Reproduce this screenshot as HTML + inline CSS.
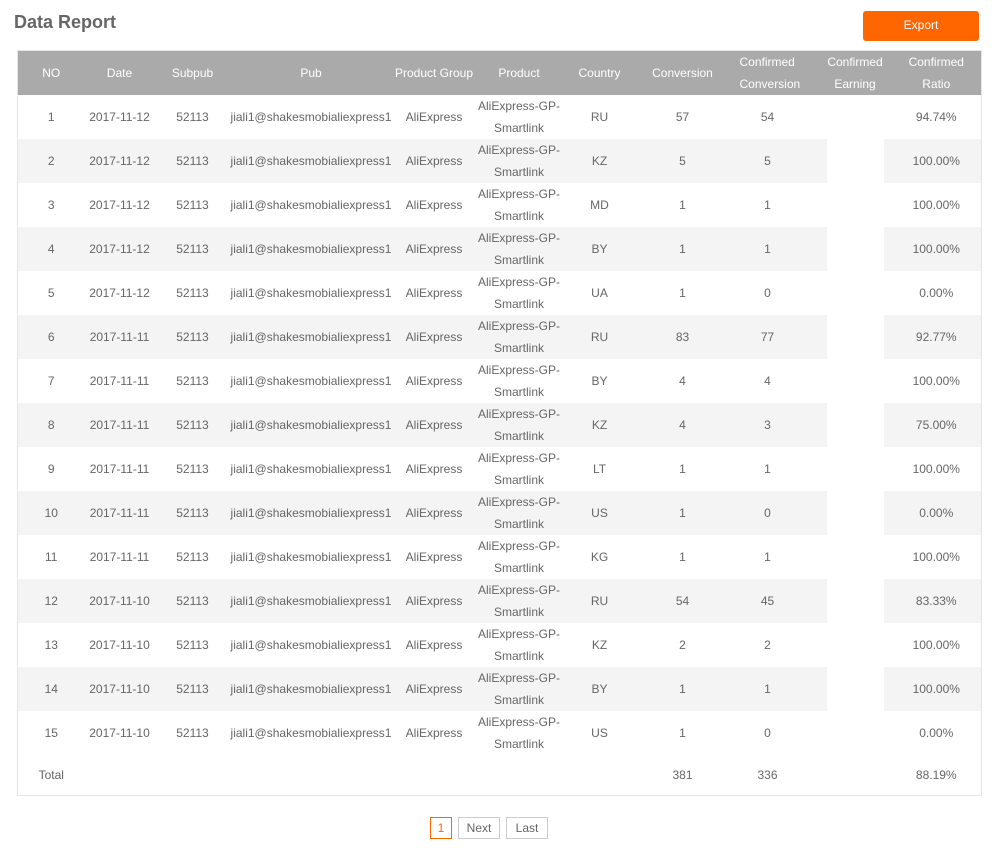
<!DOCTYPE html>
<html><head><meta charset="utf-8"><style>
body{margin:0;background:#fff;font-family:"Liberation Sans",Arial,sans-serif;font-size:12px;color:#666;width:999px;height:858px;position:relative;overflow:hidden}
h1{position:absolute;left:14px;top:10px;margin:0;font-size:18px;font-weight:bold;color:#666;line-height:24px}
.btn{position:absolute;left:863px;top:11px;width:116px;height:30px;background:#ff6600;border-radius:3px;color:#fff;font-size:12px;line-height:29px;text-align:center}
table{position:absolute;left:17px;top:50px;border-collapse:collapse;table-layout:fixed;border:1px solid #e5e5e5;width:964px}
th{background:#aaa;color:#fff;font-weight:normal;height:44px;line-height:22px;padding:0;text-align:center}
td{height:44px;line-height:22px;padding:0;text-align:center}
tr.s td{background:#f4f4f4}
tr.s td.ce{background:#fff}
td.cc,th.cc{padding-right:19px}
td.cr,th.cr{padding-left:8px}
tr.t td{height:40px}
.pg{position:absolute;top:817px;height:20px;border:1px solid #ccc;line-height:20px;text-align:center;color:#666}
</style></head><body>
<h1>Data Report</h1>
<div class="btn">Export</div>
<table>
<colgroup><col style="width:67px"><col style="width:70px"><col style="width:76px"><col style="width:161px"><col style="width:85px"><col style="width:85px"><col style="width:76px"><col style="width:90px"><col style="width:99px"><col style="width:57px"><col style="width:98px"></colgroup>
<tr><th>NO</th><th>Date</th><th>Subpub</th><th>Pub</th><th>Product Group</th><th>Product</th><th>Country</th><th>Conversion</th><th class="cc" style="padding-right:0;padding-left:0;text-align:left;padding-left:12px">Confirmed<br>Conversion</th><th>Confirmed<br>Earning</th><th class="cr">Confirmed<br>Ratio</th></tr>
<tr><td>1</td><td>2017-11-12</td><td>52113</td><td>jiali1@shakesmobialiexpress1</td><td>AliExpress</td><td>AliExpress-GP-<br>Smartlink</td><td>RU</td><td>57</td><td class="cc">54</td><td class="ce"></td><td class="cr">94.74%</td></tr>
<tr class="s"><td>2</td><td>2017-11-12</td><td>52113</td><td>jiali1@shakesmobialiexpress1</td><td>AliExpress</td><td>AliExpress-GP-<br>Smartlink</td><td>KZ</td><td>5</td><td class="cc">5</td><td class="ce"></td><td class="cr">100.00%</td></tr>
<tr><td>3</td><td>2017-11-12</td><td>52113</td><td>jiali1@shakesmobialiexpress1</td><td>AliExpress</td><td>AliExpress-GP-<br>Smartlink</td><td>MD</td><td>1</td><td class="cc">1</td><td class="ce"></td><td class="cr">100.00%</td></tr>
<tr class="s"><td>4</td><td>2017-11-12</td><td>52113</td><td>jiali1@shakesmobialiexpress1</td><td>AliExpress</td><td>AliExpress-GP-<br>Smartlink</td><td>BY</td><td>1</td><td class="cc">1</td><td class="ce"></td><td class="cr">100.00%</td></tr>
<tr><td>5</td><td>2017-11-12</td><td>52113</td><td>jiali1@shakesmobialiexpress1</td><td>AliExpress</td><td>AliExpress-GP-<br>Smartlink</td><td>UA</td><td>1</td><td class="cc">0</td><td class="ce"></td><td class="cr">0.00%</td></tr>
<tr class="s"><td>6</td><td>2017-11-11</td><td>52113</td><td>jiali1@shakesmobialiexpress1</td><td>AliExpress</td><td>AliExpress-GP-<br>Smartlink</td><td>RU</td><td>83</td><td class="cc">77</td><td class="ce"></td><td class="cr">92.77%</td></tr>
<tr><td>7</td><td>2017-11-11</td><td>52113</td><td>jiali1@shakesmobialiexpress1</td><td>AliExpress</td><td>AliExpress-GP-<br>Smartlink</td><td>BY</td><td>4</td><td class="cc">4</td><td class="ce"></td><td class="cr">100.00%</td></tr>
<tr class="s"><td>8</td><td>2017-11-11</td><td>52113</td><td>jiali1@shakesmobialiexpress1</td><td>AliExpress</td><td>AliExpress-GP-<br>Smartlink</td><td>KZ</td><td>4</td><td class="cc">3</td><td class="ce"></td><td class="cr">75.00%</td></tr>
<tr><td>9</td><td>2017-11-11</td><td>52113</td><td>jiali1@shakesmobialiexpress1</td><td>AliExpress</td><td>AliExpress-GP-<br>Smartlink</td><td>LT</td><td>1</td><td class="cc">1</td><td class="ce"></td><td class="cr">100.00%</td></tr>
<tr class="s"><td>10</td><td>2017-11-11</td><td>52113</td><td>jiali1@shakesmobialiexpress1</td><td>AliExpress</td><td>AliExpress-GP-<br>Smartlink</td><td>US</td><td>1</td><td class="cc">0</td><td class="ce"></td><td class="cr">0.00%</td></tr>
<tr><td>11</td><td>2017-11-11</td><td>52113</td><td>jiali1@shakesmobialiexpress1</td><td>AliExpress</td><td>AliExpress-GP-<br>Smartlink</td><td>KG</td><td>1</td><td class="cc">1</td><td class="ce"></td><td class="cr">100.00%</td></tr>
<tr class="s"><td>12</td><td>2017-11-10</td><td>52113</td><td>jiali1@shakesmobialiexpress1</td><td>AliExpress</td><td>AliExpress-GP-<br>Smartlink</td><td>RU</td><td>54</td><td class="cc">45</td><td class="ce"></td><td class="cr">83.33%</td></tr>
<tr><td>13</td><td>2017-11-10</td><td>52113</td><td>jiali1@shakesmobialiexpress1</td><td>AliExpress</td><td>AliExpress-GP-<br>Smartlink</td><td>KZ</td><td>2</td><td class="cc">2</td><td class="ce"></td><td class="cr">100.00%</td></tr>
<tr class="s"><td>14</td><td>2017-11-10</td><td>52113</td><td>jiali1@shakesmobialiexpress1</td><td>AliExpress</td><td>AliExpress-GP-<br>Smartlink</td><td>BY</td><td>1</td><td class="cc">1</td><td class="ce"></td><td class="cr">100.00%</td></tr>
<tr><td>15</td><td>2017-11-10</td><td>52113</td><td>jiali1@shakesmobialiexpress1</td><td>AliExpress</td><td>AliExpress-GP-<br>Smartlink</td><td>US</td><td>1</td><td class="cc">0</td><td class="ce"></td><td class="cr">0.00%</td></tr>
<tr class="t"><td>Total</td><td></td><td></td><td></td><td></td><td></td><td></td><td>381</td><td class="cc">336</td><td class="ce"></td><td class="cr">88.19%</td></tr>
</table>
<div class="pg" style="left:430px;width:20px;border-color:#ff6600;color:#ff6600">1</div>
<div class="pg" style="left:458px;width:40px">Next</div>
<div class="pg" style="left:506px;width:40px">Last</div>
</body></html>
